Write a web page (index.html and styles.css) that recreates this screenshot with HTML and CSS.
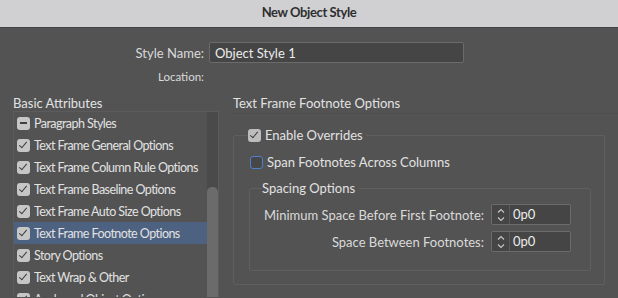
FILE: index.html
```html
<!DOCTYPE html>
<html lang="en">
<head>
    <meta charset="UTF-8">
    <title>New Object Style</title>
    <link rel="stylesheet" href="styles.css">
</head>
<body>
    <div class="titlebar">New Object Style</div>

    <div class="dialog">
        <div class="name-row">
            <label class="field-label" for="styleName">Style Name:</label>
            <input id="styleName" class="text-input" type="text" value="Object Style 1">
        </div>
        <div class="name-row location-row">
            <span class="field-label small">Location:</span>
        </div>

        <div class="main">
            <!-- left: attribute list -->
            <div class="sidebar">
                <h2 class="section-title">Basic Attributes</h2>
                <div class="list-box">
                    <ul class="attr-list">
                        <li><span class="check mixed"></span>Paragraph Styles</li>
                        <li><span class="check on"></span>Text Frame General Options</li>
                        <li><span class="check on"></span>Text Frame Column Rule Options</li>
                        <li><span class="check on"></span>Text Frame Baseline Options</li>
                        <li><span class="check on"></span>Text Frame Auto Size Options</li>
                        <li class="selected"><span class="check on"></span>Text Frame Footnote Options</li>
                        <li><span class="check on"></span>Story Options</li>
                        <li><span class="check on"></span>Text Wrap &amp; Other</li>
                        <li><span class="check on"></span>Anchored Object Options</li>
                    </ul>
                    <div class="scroll-track"><div class="scroll-thumb"></div></div>
                </div>
            </div>

            <!-- right: options panel -->
            <div class="panel">
                <h2 class="section-title panel-title">Text Frame Footnote Options</h2>

                <fieldset class="group outer">
                    <legend><span class="check on dim"></span>Enable Overrides</legend>
                    <div class="option-row"><span class="check off"></span>Span Footnotes Across Columns</div>

                    <fieldset class="group inner">
                        <legend>Spacing Options</legend>
                        <div class="spin-row">
                            <span class="spin-label">Minimum Space Before First Footnote:</span>
                            <div class="spinner">
                                <span class="spin-arrows">
                                    <svg width="10" height="16" viewBox="0 0 10 16"><path d="M2 5.5 L5 2.5 L8 5.5 M2 10.5 L5 13.5 L8 10.5" fill="none" stroke="#c8c8c8" stroke-width="1.1"/></svg>
                                </span>
                                <span class="spin-value">0p0</span>
                            </div>
                        </div>
                        <div class="spin-row">
                            <span class="spin-label">Space Between Footnotes:</span>
                            <div class="spinner">
                                <span class="spin-arrows">
                                    <svg width="10" height="16" viewBox="0 0 10 16"><path d="M2 5.5 L5 2.5 L8 5.5 M2 10.5 L5 13.5 L8 10.5" fill="none" stroke="#c8c8c8" stroke-width="1.1"/></svg>
                                </span>
                                <span class="spin-value">0p0</span>
                            </div>
                        </div>
                    </fieldset>
                </fieldset>
            </div>
        </div>
    </div>
</body>
</html>
```

FILE: styles.css
```css
:root {
    --bg: #535353;
    --bg-field: #454545;
    --border-field: #6b6b6b;
    --border-group: #5f5f5f;
    --text: #e2e2e2;
    --text-label: #dadada;
    --select: #4d6180;
    --check: #c6c6c6;
    --blue: #4f7fc8;
}

* {
    margin: 0;
    padding: 0;
    box-sizing: border-box;
}

body {
    width: 618px;
    height: 298px;
    overflow: hidden;
    background-color: var(--bg);
    font-family: 'Lato', 'Roboto', sans-serif;
    font-size: 13px;
    color: var(--text);
}

.titlebar {
    height: 28px;
    line-height: 25px;
    background-color: #d0d0d3;
    border-bottom: 1px solid #424242;
    color: #2e2e2e;
    font-weight: 700;
    font-size: 13px;
    letter-spacing: -0.4px;
    text-align: center;
}

.dialog {
    padding: 14px 0 0 13px;
}

/* name + location */
.name-row {
    display: flex;
    align-items: center;
    height: 21px;
}

.field-label {
    width: 196px;
    text-align: right;
    padding-right: 5px;
    color: var(--text-label);
}

.field-label.small {
    font-size: 11.5px;
}

.location-row {
    margin-top: 3px;
    height: 20px;
}

.text-input {
    width: 255px;
    height: 21px;
    background-color: var(--bg-field);
    border: 1px solid var(--border-field);
    border-radius: 2px;
    color: #ececec;
    font-family: inherit;
    font-size: 13px;
    padding: 0 5px;
    outline: none;
}

.main {
    display: flex;
    gap: 14px;
    margin-top: 9px;
}

.section-title {
    font-size: 13px;
    font-weight: 400;
    color: var(--text);
    height: 16px;
    line-height: 16px;
}

/* left list */
.sidebar {
    width: 206px;
}

.list-box {
    display: flex;
    border: 1px solid #5c5c5c;
    border-bottom: none;
    height: 186px;
    overflow: hidden;
}

.attr-list {
    list-style: none;
    flex: 1;
    min-width: 0;
}

.attr-list li {
    display: flex;
    align-items: center;
    height: 22px;
    padding-left: 3px;
    white-space: nowrap;
    font-size: 12.5px;
    letter-spacing: -0.55px;
}

.attr-list li.selected {
    background-color: var(--select);
}

.scroll-track {
    display: flex;
    flex-direction: column;
    width: 11px;
    background-color: #4a4a4a;
}

.scroll-thumb {
    flex: 1;
    margin-top: 75px;
    border-radius: 5px 5px 0 0;
    background-color: #6b6b6b;
}

/* checkboxes */
.check {
    width: 13px;
    height: 13px;
    border-radius: 3px;
    margin-right: 4px;
    flex-shrink: 0;
    position: relative;
    display: inline-block;
}

.check.on,
.check.mixed {
    background-color: var(--check);
}

.check.on::after {
    content: '';
    position: absolute;
    left: 4px;
    top: 1.5px;
    width: 3px;
    height: 7px;
    border-right: 1.8px solid #3c3c3c;
    border-bottom: 1.8px solid #3c3c3c;
    transform: rotate(40deg);
}

.check.mixed::after {
    content: '';
    position: absolute;
    left: 3px;
    top: 5.5px;
    width: 7px;
    height: 2px;
    background-color: #3f3f3f;
}

.check.dim {
    background-color: #bdbdbd;
}

.check.off {
    background-color: #474747;
    border: 1.5px solid var(--blue);
    border-radius: 3px;
}

/* right panel */
.panel {
    flex: 1;
}

.panel-title {
    border-bottom: 1px solid #4d4d4d;
    height: 19px;
}

.group {
    border: 1px solid var(--border-group);
    border-radius: 2px;
}

.group legend {
    display: flex;
    align-items: center;
    padding: 0 3px 0 0;
    line-height: 16px;
}

.outer {
    width: 372px;
    height: 158px;
    margin-top: 13px;
    padding: 0 0 0 14px;
}

.option-row {
    display: flex;
    align-items: center;
    height: 22px;
    margin-top: 8px;
    padding-left: 2px;
}

.inner {
    width: 342px;
    height: 91px;
    margin: 7px 0 0 1px;
    padding: 8px 0 0 0;
}

.inner > legend {
    margin-left: 12px;
    padding: 0 4px 0 0;
}

.spin-row {
    display: flex;
    align-items: center;
    justify-content: flex-end;
    width: 321px;
    height: 21px;
    margin-bottom: 6px;
}

.spin-label {
    margin-right: 7px;
    color: var(--text-label);
}

.spinner {
    display: flex;
    width: 80px;
    height: 21px;
    border: 1px solid var(--border-field);
    border-radius: 2px;
    background-color: var(--bg-field);
}

.spin-arrows {
    width: 18px;
    display: flex;
    align-items: center;
    justify-content: center;
    border-right: 1px solid #5a5a5a;
}

.spin-value {
    padding-left: 3px;
    line-height: 19px;
    color: #ececec;
}
```
